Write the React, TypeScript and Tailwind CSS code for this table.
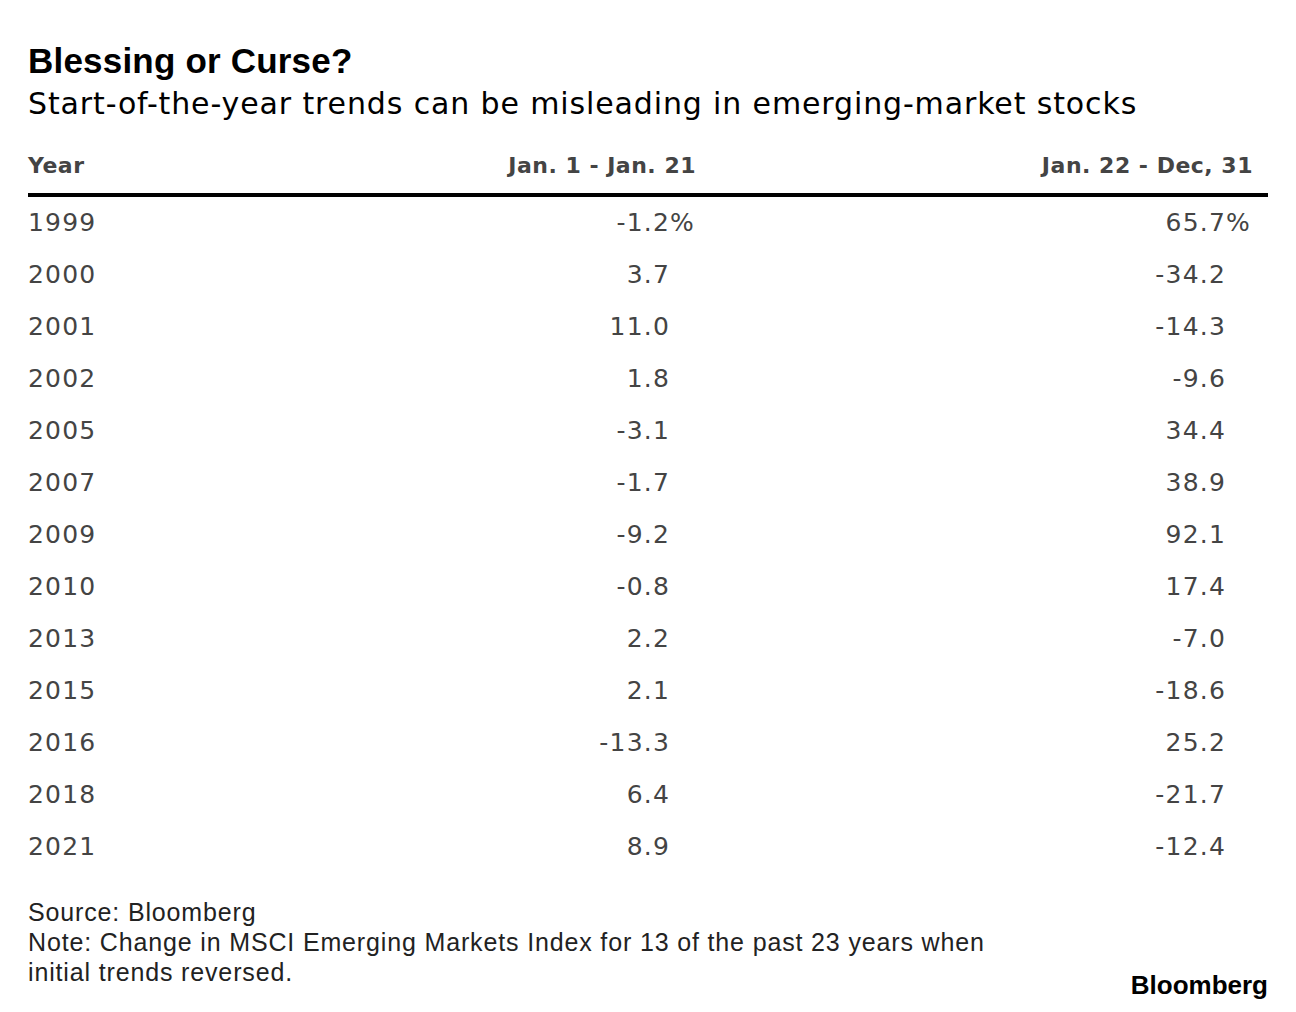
import React from 'react';

type Row = {
  year: string;
  early: string;
  rest: string;
  pct?: boolean;
};

const rows: Row[] = [
  { year: '1999', early: '-1.2', rest: '65.7', pct: true },
  { year: '2000', early: '3.7', rest: '-34.2' },
  { year: '2001', early: '11.0', rest: '-14.3' },
  { year: '2002', early: '1.8', rest: '-9.6' },
  { year: '2005', early: '-3.1', rest: '34.4' },
  { year: '2007', early: '-1.7', rest: '38.9' },
  { year: '2009', early: '-9.2', rest: '92.1' },
  { year: '2010', early: '-0.8', rest: '17.4' },
  { year: '2013', early: '2.2', rest: '-7.0' },
  { year: '2015', early: '2.1', rest: '-18.6' },
  { year: '2016', early: '-13.3', rest: '25.2' },
  { year: '2018', early: '6.4', rest: '-21.7' },
  { year: '2021', early: '8.9', rest: '-12.4' },
];

const Value: React.FC<{ value: string; pct?: boolean }> = ({ value, pct }) => (
  <div className="flex justify-end">
    <span>{value}</span>
    <span className="w-[24px] text-left">{pct ? '%' : ''}</span>
  </div>
);

export default function App() {
  return (
    <div className="w-[1296px] h-[1012px] bg-white px-[28px] pt-[41px] text-black font-['Liberation_Sans',Arial,sans-serif]">
      {/* Heading */}
      <h1 className="text-[35px] leading-[40px] font-bold tracking-[0.2px]">Blessing or Curse?</h1>
      <p className="mt-[3px] text-[30px] leading-[40px] tracking-[0.87px] font-['DejaVu_Sans',sans-serif]">
        Start-of-the-year trends can be misleading in emerging-market stocks
      </p>

      {/* Table */}
      <div className="mt-[27px] w-[1240px] font-['DejaVu_Sans',sans-serif]">
        <div className="grid grid-cols-[394px_274px_557px] pb-[12px] border-b-4 border-black text-[22px] leading-[30px] font-bold tracking-[0.5px] text-[#444]">
          <div>Year</div>
          <div className="text-right">Jan. 1 - Jan. 21</div>
          <div className="text-right">Jan. 22 - Dec, 31</div>
        </div>
        {rows.map((r) => (
          <div
            key={r.year}
            className="grid grid-cols-[394px_272px_556px] text-[25px] leading-[52px] tracking-[1.2px] text-[#444]"
          >
            <div>{r.year}</div>
            <Value value={r.early} pct={r.pct} />
            <Value value={r.rest} pct={r.pct} />
          </div>
        ))}
      </div>

      {/* Footer */}
      <div className="mt-[24px] flex justify-between items-end text-[25px] leading-[30px] tracking-[0.85px] text-[#222]">
        <div>
          <div>Source: Bloomberg</div>
          <div>Note: Change in MSCI Emerging Markets Index for 13 of the past 23 years when</div>
          <div>initial trends reversed.</div>
        </div>
        <div className="text-[26px] leading-[30px] font-bold text-black tracking-normal mb-[-13px]">Bloomberg</div>
      </div>
    </div>
  );
}
